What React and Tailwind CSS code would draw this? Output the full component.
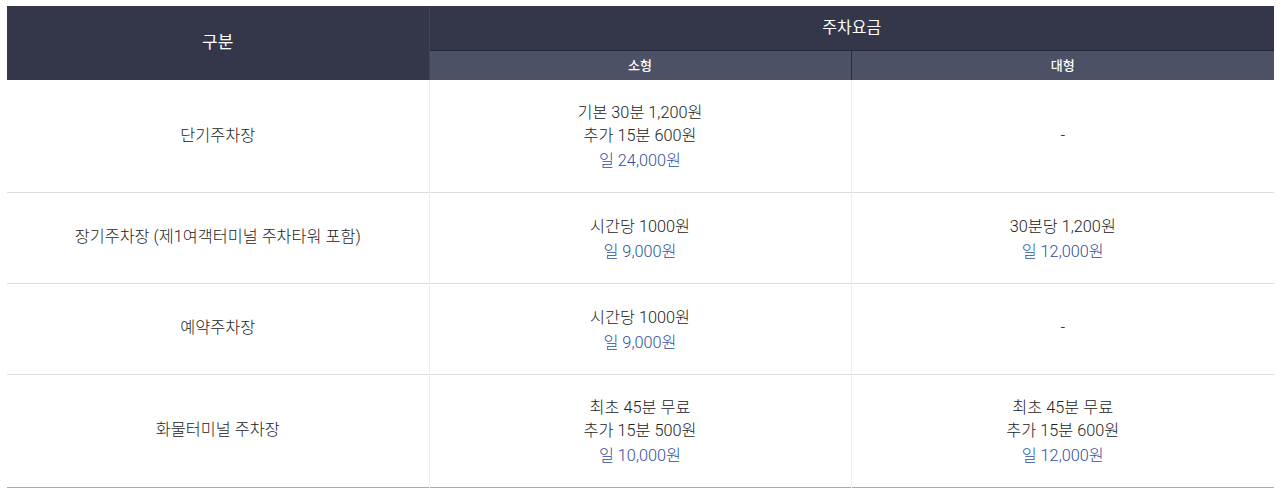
import React from 'react';

const rows = [
    {
        name: '단기주차장',
        small: { lines: ['기본 30분 1,200원', '추가 15분 600원'], day: '일 24,000원' },
        large: null,
        h: 'h-[112px]',
    },
    {
        name: '장기주차장 (제1여객터미널 주차타워 포함)',
        small: { lines: ['시간당 1000원'], day: '일 9,000원' },
        large: { lines: ['30분당 1,200원'], day: '일 12,000원' },
        h: 'h-[91px]',
    },
    {
        name: '예약주차장',
        small: { lines: ['시간당 1000원'], day: '일 9,000원' },
        large: null,
        h: 'h-[91px]',
    },
    {
        name: '화물터미널 주차장',
        small: { lines: ['최초 45분 무료', '추가 15분 500원'], day: '일 10,000원' },
        large: { lines: ['최초 45분 무료', '추가 15분 600원'], day: '일 12,000원' },
        h: 'h-[113px]',
    },
];

const Fee = ({ fee }) => {
    if (!fee) return <span>-</span>;
    return (
        <div className="leading-[23px] pt-[2px]">
            {fee.lines.map((l) => (
                <p key={l}>{l}</p>
            ))}
            <p className="mt-[2px] text-[#2f4fa0]">{fee.day}</p>
        </div>
    );
};

const App = () => {
    return (
        <div className="bg-white w-[1287px] h-[494px] pt-[6px] pl-[7px]" style={{ fontFamily: "Roboto, 'Noto Sans CJK KR', sans-serif" }}>
            <table className="w-[1267px] table-fixed border-collapse text-center text-[16.3px] font-light text-[#222]">
                <colgroup>
                    <col className="w-[422px]" />
                    <col className="w-[422px]" />
                    <col className="w-[423px]" />
                </colgroup>
                <thead>
                    {/* header */}
                    <tr className="h-[44px]">
                        <th rowSpan={2} className="bg-[#343649] text-white text-[17px] font-normal border-r border-[#40435a]">구분</th>
                        <th colSpan={2} className="bg-[#343649] text-white text-[16px] font-normal border-b border-[#25283a]">주차요금</th>
                    </tr>
                    <tr className="h-[30px]">
                        <th className="bg-[#4c5165] text-white text-[13px] font-medium border-r border-[#2a2d3e]">소형</th>
                        <th className="bg-[#4c5165] text-white text-[13px] font-medium">대형</th>
                    </tr>
                </thead>
                <tbody>
                    {rows.map((r, i) => (
                        <tr key={r.name} className={`${r.h} border-b ${i === rows.length - 1 ? 'border-[#aaaaaa]' : 'border-[#dddddd]'}`}>
                            <td className="border-r border-[#eeeeee]">{r.name}</td>
                            <td className="border-r border-[#eeeeee]"><Fee fee={r.small} /></td>
                            <td><Fee fee={r.large} /></td>
                        </tr>
                    ))}
                </tbody>
            </table>
        </div>
    );
};

export default App;
